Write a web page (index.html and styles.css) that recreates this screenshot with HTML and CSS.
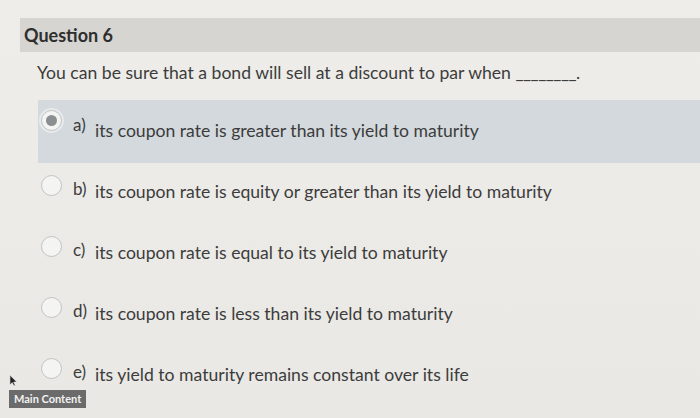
FILE: index.html
```html
<!DOCTYPE html>
<html lang="en">
<head>
    <meta charset="UTF-8">
    <meta name="viewport" content="width=device-width, initial-scale=1.0">
    <title>Question 6</title>
    <link rel="stylesheet" href="styles.css">
</head>
<body>

    <!-- question header -->
    <div class="question-header">
        <h2>Question 6</h2>
    </div>

    <p class="prompt">You can be sure that a bond will sell at a discount to par when <span class="blank">________</span>.</p>

    <!-- answers -->
    <ul class="options">
        <li class="option first selected">
            <span class="radio"></span>
            <span class="letter">a)</span>
            <span class="answer">its coupon rate is greater than its yield to maturity</span>
        </li>
        <li class="option">
            <span class="radio"></span>
            <span class="letter">b)</span>
            <span class="answer">its coupon rate is equity or greater than its yield to maturity</span>
        </li>
        <li class="option">
            <span class="radio"></span>
            <span class="letter">c)</span>
            <span class="answer">its coupon rate is equal to its yield to maturity</span>
        </li>
        <li class="option">
            <span class="radio"></span>
            <span class="letter">d)</span>
            <span class="answer">its coupon rate is less than its yield to maturity</span>
        </li>
        <li class="option">
            <span class="radio"></span>
            <span class="letter">e)</span>
            <span class="answer">its yield to maturity remains constant over its life</span>
        </li>
    </ul>

    <svg class="cursor" width="9" height="13" viewBox="0 0 10 14">
        <path d="M1 1 L1 12 L3.6 9.4 L5.4 13.2 L7 12.4 L5.3 8.8 L8.8 8.8 Z" fill="#222" stroke="#eee" stroke-width="0.8"/>
    </svg>
    <a class="skip-link" href="#">Main Content</a>

</body>
</html>
```

FILE: styles.css
```css
body {
    margin: 0;
    height: 418px;
    overflow: hidden;
    font-family: Lato, "Open Sans", sans-serif;
    color: #3c3c3c;
    background: linear-gradient(#eeede9, #e9e8e4);
    position: relative;
}

.question-header {
    margin: 18px 0 0 20px;
    height: 34px;
    background-color: #d6d5d1;
    display: flex;
    align-items: center;
    padding-left: 4px;
}

.question-header h2 {
    margin: 0;
    font-size: 18px;
    font-weight: 700;
    color: #2e2e2e;
}

.prompt {
    margin: 9px 0 0 37px;
    font-size: 17.6px;
    line-height: 24px;
}

.blank {
    letter-spacing: -0.5px;
}

.options {
    list-style: none;
    margin: 15px 0 0 38px;
    padding: 0;
}

.option {
    display: flex;
    align-items: flex-start;
    height: 61px;
    padding-left: 3px;
}

.option.first {
    height: 63px;
}

.option.selected {
    background-color: #d3d9dc;
}

.radio {
    width: 19px;
    height: 19px;
    border: 1px solid #c2c2c0;
    border-radius: 50%;
    background-color: #f4f4f2;
    position: relative;
    flex-shrink: 0;
}

.option.first .radio {
    margin-top: 10px;
}

.option:not(.first) .radio {
    margin-top: 12px;
}

.selected .radio {
    box-shadow: 0 0 0 2px #e6eaec;
}

.selected .radio::after {
    content: "";
    position: absolute;
    top: 4px;
    left: 4px;
    width: 11px;
    height: 11px;
    border-radius: 50%;
    background-color: #8c8f91;
}

.letter {
    margin: 14px 0 0 11px;
    font-size: 17px;
    width: 22px;
}

.option:not(.first) .letter {
    margin-top: 15px;
}

.answer {
    margin-top: 20px;
    font-size: 17.6px;
}

.option:not(.first) .answer {
    margin-top: 18px;
}

.cursor {
    position: absolute;
    left: 9px;
    top: 374px;
}

.skip-link {
    position: absolute;
    left: 9px;
    top: 390px;
    padding: 2px 5px;
    background-color: #6b6b6b;
    color: #f2f2f2;
    font-size: 11px;
    font-weight: 700;
    text-decoration: none;
    line-height: 14px;
}
```
